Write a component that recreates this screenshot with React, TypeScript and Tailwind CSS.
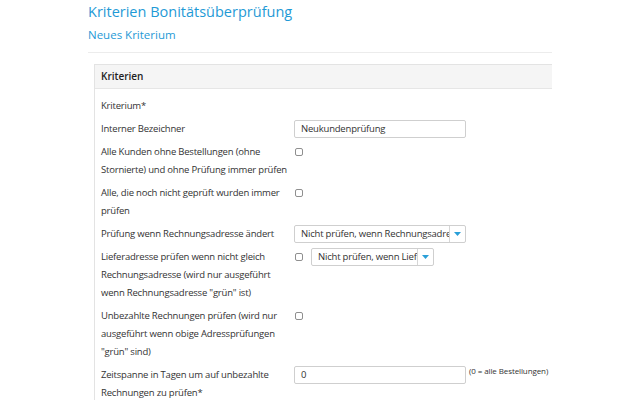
import React from "react"

const Checkbox = () => (
  <span className="inline-block w-[8px] h-[8px] ml-[1px] rounded-[2px] border border-[#8f8f8f] bg-white" />
)

const Select = ({ value, width }: { value: string; width: string }) => (
  <div className={`flex h-[18px] items-stretch rounded-[2px] border border-[#cfcfcf] bg-white ${width}`}>
    <div className="flex-1 overflow-hidden whitespace-nowrap pl-[6px] leading-[16px]">{value}</div>
    <div className="flex w-[16px] items-center justify-center border-l border-[#d6d6d6]">
      <svg width="7" height="4" viewBox="0 0 7 4">
        <path d="M0 0 L7 0 L3.5 4 Z" fill="#2a9fd8" />
      </svg>
    </div>
  </div>
)

const TextInput = ({ value }: { value: string }) => (
  <div className="h-[18px] w-[172px] rounded-[2px] border border-[#cfcfcf] bg-white pl-[6px] leading-[16px]">{value}</div>
)

type Row = { label: string[]; value?: React.ReactNode }

export default function App() {
  const rows: Row[] = [
    { label: ["Kriterium*"] },
    { label: ["Interner Bezeichner"], value: <TextInput value="Neukundenprüfung" /> },
    {
      label: ["Alle Kunden ohne Bestellungen (ohne", "Stornierte) und ohne Prüfung immer prüfen"],
      value: <Checkbox />,
    },
    { label: ["Alle, die noch nicht geprüft wurden immer", "prüfen"], value: <Checkbox /> },
    {
      label: ["Prüfung wenn Rechnungsadresse ändert"],
      value: <Select value="Nicht prüfen, wenn Rechnungsadresse geändert" width="w-[172px]" />,
    },
    {
      label: [
        "Lieferadresse prüfen wenn nicht gleich",
        "Rechnungsadresse (wird nur ausgeführt",
        'wenn Rechnungsadresse "grün" ist)',
      ],
      value: (
        <div className="flex items-center gap-[8px]">
          <Checkbox />
          <Select value="Nicht prüfen, wenn Lieferadresse" width="w-[123px]" />
        </div>
      ),
    },
    {
      label: ["Unbezahlte Rechnungen prüfen (wird nur", "ausgeführt wenn obige Adressprüfungen", '"grün" sind)'],
      value: <Checkbox />,
    },
    {
      label: ["Zeitspanne in Tagen um auf unbezahlte", "Rechnungen zu prüfen*"],
      value: (
        <div className="flex items-start gap-[3px]">
          <TextInput value="0" />
          <span className="-mt-[2px] whitespace-nowrap text-[8px] leading-[14px] tracking-[-0.1px]">
            (0 = alle Bestellungen)
          </span>
        </div>
      ),
    },
  ]

  return (
    <div className="h-[400px] w-[640px] overflow-hidden bg-white font-['Open_Sans',sans-serif] text-[#333]">
      <div className="ml-[88px] w-[464px] overflow-hidden">
        {/* Page title */}
        <h1 className="pt-[2px] text-[14.5px] leading-[20px] text-[#1f9ad6]">Kriterien Bonitätsüberprüfung</h1>
        <h2 className="mt-[5px] text-[11.5px] leading-[16px] text-[#1f9ad6]">Neues Kriterium</h2>
        <div className="mt-[9px] border-t border-[#ececec]" />

        {/* Panel */}
        <div className="ml-[6px] mt-[11px] w-[520px] border border-[#e3e3e3]">
          <div className="flex h-[24px] items-center border-b border-[#e6e6e6] bg-[#f5f5f5] pl-[6px] text-[10px] font-semibold text-[#222]">
            Kriterien
          </div>
          <div className="flex flex-col gap-[5px] pl-[6px] pt-[8px] text-[9.5px] tracking-[-0.2px]">
            {rows.map((row, i) => (
              <div key={i} className="flex items-start">
                <div className="w-[193px] shrink-0 leading-[18px]">
                  {row.label.map((line, j) => (
                    <div key={j} className="whitespace-nowrap">
                      {line}
                    </div>
                  ))}
                </div>
                <div className="flex h-[18px] items-center">{row.value}</div>
              </div>
            ))}
          </div>
        </div>
      </div>
    </div>
  )
}
